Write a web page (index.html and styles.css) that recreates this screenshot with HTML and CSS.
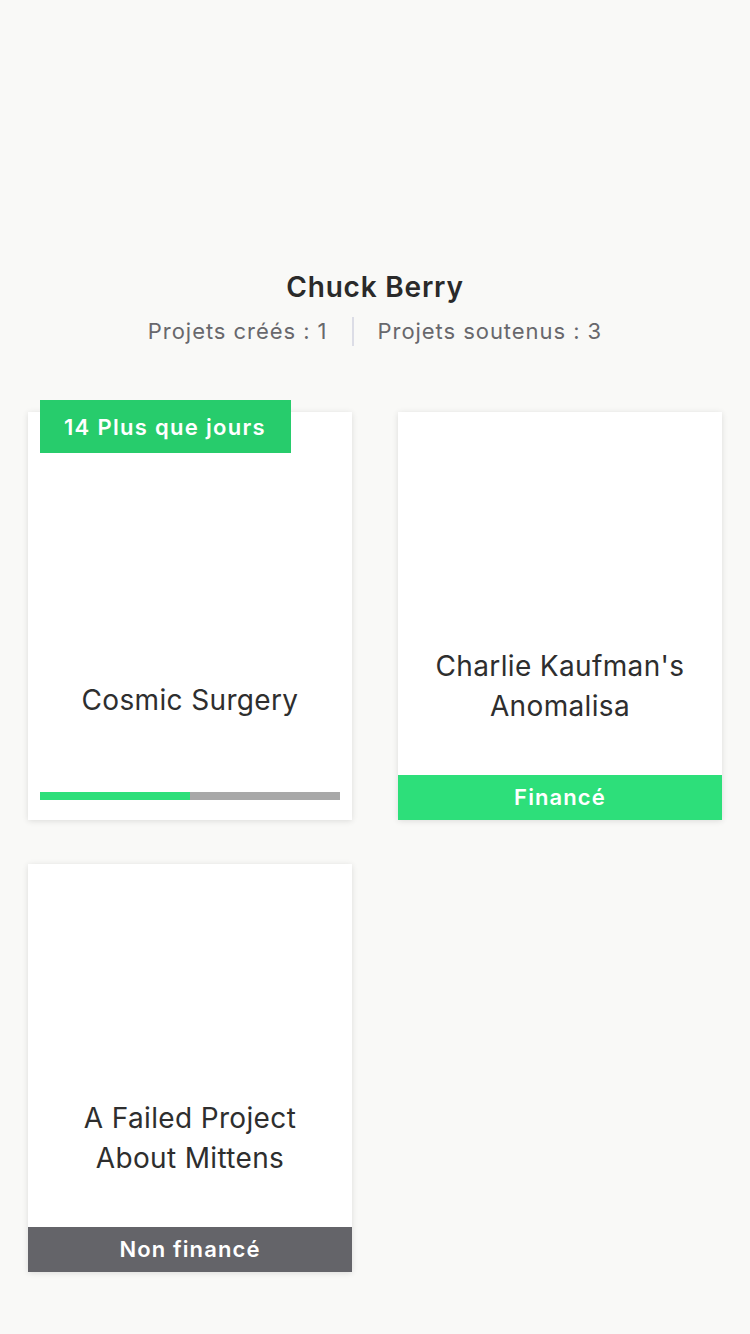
FILE: index.html
```html
<!DOCTYPE html>
<html lang="fr">
<head>
<meta charset="utf-8">
<link rel="stylesheet" href="styles.css">
</head>
<body>
<div class="page">
  <header class="profile">
    <h1 class="name">Chuck Berry</h1>
    <div class="stats">
      <span class="stat">Projets créés : 1</span>
      <span class="sep"></span>
      <span class="stat">Projets soutenus : 3</span>
    </div>
  </header>
  <section class="grid">
    <article class="card">
      <div class="badge">14 Plus que jours</div>
      <div class="spacer"></div>
      <h2 class="title t-single">Cosmic Surgery</h2>
      <div class="progress"><div class="fill" style="width:50%"></div></div>
    </article>
    <article class="card">
      <div class="spacer"></div>
      <h2 class="title t-foot">Charlie Kaufman's<br>Anomalisa</h2>
      <div class="status funded">Financé</div>
    </article>
    <article class="card">
      <div class="spacer"></div>
      <h2 class="title t-foot">A Failed Project<br>About Mittens</h2>
      <div class="status failed">Non financé</div>
    </article>
  </section>
</div>
</body>
</html>
```
FILE: styles.css
```css
* { box-sizing: border-box; }
html, body { margin: 0; padding: 0; }
body {
  background: #f9f9f7;
  font-family: Inter, "Noto Sans", "Liberation Sans", sans-serif;
  color: #2a2a2a;
  width: 750px;
  min-height: 1334px;
}
.page { padding: 268px 28px 60px; }
.profile { text-align: center; }
.name {
  margin: 0;
  font-size: 28px;
  font-weight: 600;
  line-height: 38px;
  letter-spacing: 0.8px;
  color: #2a2a2a;
}
.stats {
  display: flex;
  justify-content: center;
  align-items: center;
  margin-top: 8px;
  height: 30px;
}
.stat {
  font-size: 22px;
  color: #68686c;
  line-height: 30px;
  letter-spacing: 0.95px;
  padding-top: 4px;
}
.sep {
  width: 2px;
  height: 29px;
  background: #dcdde6;
  margin: 4px 24px 0;
}
.grid {
  display: grid;
  grid-template-columns: 324px 324px;
  column-gap: 46px;
  row-gap: 44px;
  margin-top: 68px;
}
.card {
  position: relative;
  height: 408px;
  background: #fff;
  box-shadow: 0 1px 6px rgba(0,0,0,0.12);
  display: flex;
  flex-direction: column;
}
.badge {
  position: absolute;
  left: 12px;
  top: -12px;
  width: 251px;
  height: 53px;
  background: #27cc6c;
  color: #fff;
  font-size: 22px;
  font-weight: 600;
  line-height: 53px;
  letter-spacing: 1.3px;
  padding-left: 24px;
  padding-top: 1px;
}
.spacer { flex: 1; }
.title {
  margin: 0;
  font-size: 28px;
  font-weight: 400;
  line-height: 40px;
  letter-spacing: 0.35px;
  text-align: center;
  color: #2e2e2e;
}
.t-single { margin-bottom: 72px; }
.t-foot { margin-bottom: 49px; }
.progress {
  display: flex;
  height: 8px;
  margin: 0 12px 20px;
  background: #a8a8a8;
}
.fill { background: #2ddf7a; height: 100%; }
.status {
  height: 45px;
  line-height: 45px;
  text-align: center;
  color: #fff;
  font-size: 22px;
  font-weight: 600;
  letter-spacing: 1.1px;
}
.funded { background: #2ddf7a; }
.failed { background: #646469; }
```
